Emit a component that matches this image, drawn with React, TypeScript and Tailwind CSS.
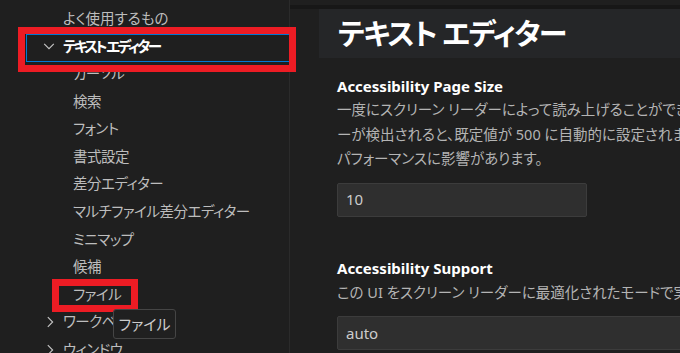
const font = "font-['Segoe_UI','Noto_Sans','Noto_Sans_CJK_JP',sans-serif] [font-feature-settings:'palt']";

const ChevronDown = () => (
    <svg width="14" height="14" viewBox="0 0 16 16" fill="none" stroke="#c5c5c5" strokeWidth="1.3">
        <path d="M2.5 5.5 8 11l5.5-5.5" />
    </svg>
);

const ChevronRight = () => (
    <svg width="14" height="14" viewBox="0 0 16 16" fill="none" stroke="#c5c5c5" strokeWidth="1.3">
        <path d="M5.5 2.5 11 8l-5.5 5.5" />
    </svg>
);

const subItems = [
    'カーソル',
    '検索',
    'フォント',
    '書式設定',
    '差分エディター',
    'マルチファイル差分エディター',
    'ミニマップ',
    '候補',
    'ファイル',
];

const Sidebar = () => (
    <div className="w-[290px] shrink-0 border-r border-[#2b2b2b] pt-[5px] text-[14.5px] tracking-[-0.5px] text-[#bdbdbd]">
        <div className="h-[27.6px] flex items-center pl-[63px] tracking-normal">よく使用するもの</div>
        <div className="h-[27.6px] flex items-center pl-[42px] gap-[7px] text-white">
            <ChevronDown />
            <span className="font-bold text-[14.5px] tracking-[-2.5px]">テキスト エディター</span>
        </div>
        {subItems.map(item => (
            <div key={item} className="h-[27.6px] flex items-center pl-[73px]">{item}</div>
        ))}
        <div className="h-[27.6px] flex items-center pl-[43px] gap-[6px]">
            <ChevronRight />
            <span>ワークベンチ</span>
        </div>
        <div className="h-[27.6px] flex items-center pl-[43px] gap-[6px]">
            <ChevronRight />
            <span>ウィンドウ</span>
        </div>
    </div>
);

const Setting = (props: { title: string, lines: string[], children: React.ReactNode }) => (
    <div>
        <div className="h-[24px] flex items-center text-[15px] font-bold text-white">{props.title}</div>
        <div className="text-[14.5px] text-[#b4b4b4]">
            {props.lines.map(line => (
                <div key={line} className="h-[24.5px] flex items-center whitespace-nowrap">{line}</div>
            ))}
        </div>
        {props.children}
    </div>
);

export default function App() {
    return (
        <div className={`relative w-[680px] h-[353px] overflow-hidden bg-[#1f1f1f] flex ${font}`}>
            <Sidebar />
            <div className="flex-1 min-w-0 relative">
                <div className="h-[5px]" />
                <div className="h-[4px] bg-[#171717]" />
                <div className="ml-[29px] h-[49px] bg-[#252628] flex items-center pl-[19px] text-[29px] tracking-[-1.5px] font-semibold text-white whitespace-nowrap">
                    テキスト エディター
                </div>
                <div className="pl-[47px] pt-[16px]">
                    <Setting
                        title="Accessibility Page Size"
                        lines={[
                            '一度にスクリーン リーダーによって読み上げることができるエディターの行数を制御します。',
                            'ーが検出されると、既定値が 500 に自動的に設定されます。警告: 既定値より大きい数値の場合は、',
                            'パフォーマンスに影響があります。',
                        ]}
                    >
                        <div className="mt-[11px] w-[250px] h-[34px] bg-[#2f2f2f] border border-[#3c3c3c] rounded-[2px] flex items-center pl-[8px] text-[15px] text-[#cccccc]">10</div>
                    </Setting>
                    <div className="h-[40px]" />
                    <Setting
                        title="Accessibility Support"
                        lines={['この UI をスクリーン リーダーに最適化されたモードで実行するかどうかを制御します。']}
                    >
                        <div className="mt-[11px] w-[400px] h-[34px] bg-[#2f2f2f] border border-[#3c3c3c] rounded-[2px] flex items-center pl-[8px] text-[15px] text-[#cccccc]">auto</div>
                    </Setting>
                </div>
            </div>

            {/* annotation overlays */}
            <div className="absolute left-[26px] top-[34px] w-[264px] h-[28px] border border-[#0078d4]" />
            <div className="absolute left-[18px] top-[27px] w-[278px] h-[45px] border-[7px] border-[#ed1c24]" />
            <div className="absolute left-[52px] top-[279px] w-[86px] h-[33px] border-[7px] border-[#ed1c24]" />
            <div className="absolute left-[113px] top-[309px] w-[63px] h-[30px] bg-[#202020] border border-[#454545] rounded-[3px] flex items-center justify-center text-[15px] text-[#cccccc]">ファイル</div>
        </div>
    );
}
